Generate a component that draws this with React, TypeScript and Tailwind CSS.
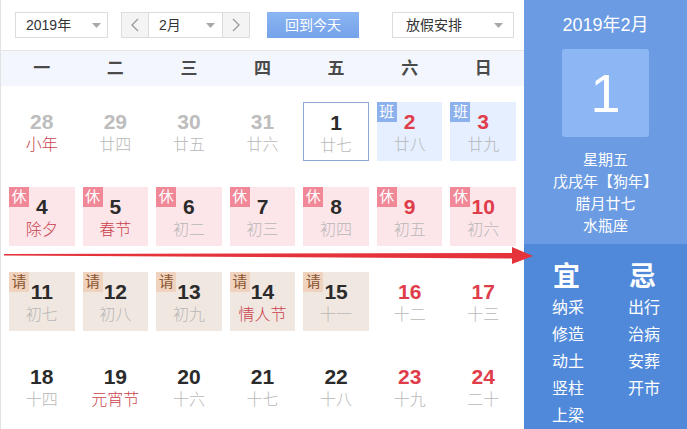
import React from "react";

type Day = {
  n: number;
  lunar: string;
  numColor?: "gray" | "dark" | "red";
  lunarRed?: boolean;
  tag?: "休" | "班" | "请";
  today?: boolean;
};

const rows: Day[][] = [
  [
    { n: 28, lunar: "小年", numColor: "gray", lunarRed: true },
    { n: 29, lunar: "廿四", numColor: "gray" },
    { n: 30, lunar: "廿五", numColor: "gray" },
    { n: 31, lunar: "廿六", numColor: "gray" },
    { n: 1, lunar: "廿七", today: true },
    { n: 2, lunar: "廿八", numColor: "red", tag: "班" },
    { n: 3, lunar: "廿九", numColor: "red", tag: "班" },
  ],
  [
    { n: 4, lunar: "除夕", lunarRed: true, tag: "休" },
    { n: 5, lunar: "春节", lunarRed: true, tag: "休" },
    { n: 6, lunar: "初二", tag: "休" },
    { n: 7, lunar: "初三", tag: "休" },
    { n: 8, lunar: "初四", tag: "休" },
    { n: 9, lunar: "初五", numColor: "red", tag: "休" },
    { n: 10, lunar: "初六", numColor: "red", tag: "休" },
  ],
  [
    { n: 11, lunar: "初七", tag: "请" },
    { n: 12, lunar: "初八", tag: "请" },
    { n: 13, lunar: "初九", tag: "请" },
    { n: 14, lunar: "情人节", lunarRed: true, tag: "请" },
    { n: 15, lunar: "十一", tag: "请" },
    { n: 16, lunar: "十二", numColor: "red" },
    { n: 17, lunar: "十三", numColor: "red" },
  ],
  [
    { n: 18, lunar: "十四" },
    { n: 19, lunar: "元宵节", lunarRed: true },
    { n: 20, lunar: "十六" },
    { n: 21, lunar: "十七" },
    { n: 22, lunar: "十八" },
    { n: 23, lunar: "十九", numColor: "red" },
    { n: 24, lunar: "二十", numColor: "red" },
  ],
];

const weekdays = ["一", "二", "三", "四", "五", "六", "日"];
const yi = ["纳采", "修造", "动土", "竖柱", "上梁"];
const ji = ["出行", "治病", "安葬", "开市"];

function Caret() {
  return (
    <svg width="9" height="5" viewBox="0 0 9 5" className="shrink-0">
      <path d="M0 0 L9 0 L4.5 5 Z" fill="#a8a8a8" />
    </svg>
  );
}

function Chevron({ dir }: { dir: "left" | "right" }) {
  return (
    <svg width="8" height="14" viewBox="0 0 8 14">
      <path
        d={dir === "left" ? "M7 1 L1 7 L7 13" : "M1 1 L7 7 L1 13"}
        fill="none"
        stroke="#9a9a9a"
        strokeWidth="1.3"
      />
    </svg>
  );
}

function Cell({ d }: { d: Day }) {
  let bg = "bg-transparent";
  if (d.tag === "休") bg = "bg-[#fde6ea]";
  if (d.tag === "班") bg = "bg-[#e5efff]";
  if (d.tag === "请") bg = "bg-[#f1e7e1]";
  const border = d.today ? "border border-[#8eaad4]" : "";
  const numColor =
    d.numColor === "gray" ? "text-[#bdbdbd]" : d.numColor === "red" ? "text-[#e03d4b]" : "text-[#2b2b2b]";
  const lunarColor = d.lunarRed ? "text-[#c9414b]" : "text-[#b8b8b8]";
  let badge = "";
  if (d.tag === "休") badge = "bg-[#f08898] text-white";
  if (d.tag === "班") badge = "bg-[#8db1ec] text-white";
  if (d.tag === "请") badge = "bg-[#f0d3bf] text-[#8a5530]";
  return (
    <div className={`relative mx-[4px] h-[59px] ${bg} ${border} flex flex-col items-center pt-[8px]`}>
      {d.tag && (
        <span className={`absolute left-0 top-0 w-[20px] h-[20px] text-[15px] leading-[20px] text-center ${badge}`}>
          {d.tag}
        </span>
      )}
      <span className={`text-[21px] leading-[24px] font-bold ${numColor}`}>{d.n}</span>
      <span className={`text-[16px] leading-[22px] font-light ${lunarColor}`}>{d.lunar}</span>
    </div>
  );
}

export default function App() {
  return (
    <div
      className="relative flex w-[687px] h-[429px] overflow-hidden bg-white"
      style={{ fontFamily: '"Liberation Sans", "Noto Sans CJK SC", sans-serif' }}
    >
      <div className="w-[524px] shrink-0 border-l border-[#e2e2e2] flex flex-col">
        <div className="h-[51px] flex items-center pl-[14px] border-b border-[#e6e6e6]">
          <div className="w-[93px] h-[26px] border border-[#dcdcdc] flex items-center justify-between pl-[10px] pr-[6px] text-[14px] text-[#333]">
            <span>2019年</span>
            <Caret />
          </div>
          <div className="ml-[13px] h-[26px] flex border border-[#dcdcdc]">
            <div className="w-[27px] bg-[#f4f4f4] flex items-center justify-center border-r border-[#dcdcdc]">
              <Chevron dir="left" />
            </div>
            <div className="w-[73px] flex items-center justify-between pl-[10px] pr-[7px] text-[14px] text-[#333]">
              <span>2月</span>
              <Caret />
            </div>
            <div className="w-[27px] bg-[#f4f4f4] flex items-center justify-center border-l border-[#dcdcdc]">
              <Chevron dir="right" />
            </div>
          </div>
          <div className="ml-[17px] w-[92px] h-[26px] bg-gradient-to-b from-[#8bb5f2] to-[#75a3ea] text-white text-[14px] flex items-center justify-center">
            回到今天
          </div>
          <div className="ml-[33px] w-[122px] h-[26px] border border-[#dcdcdc] flex items-center justify-between pl-[13px] pr-[10px] text-[14px] text-[#333]">
            <span>放假安排</span>
            <Caret />
          </div>
        </div>
        <div className="h-[35px] grid grid-cols-7 px-[4px] bg-[#f3f7fd]">
          {weekdays.map((w) => (
            <div key={w} className="flex items-center justify-center text-[17px] font-bold text-[#4a4a4a]">
              {w}
            </div>
          ))}
        </div>
        <div className="px-[4px]">
          {rows.map((r, i) => (
            <div key={i} className="grid grid-cols-7 h-[85px] pt-[16px]">
              {r.map((d) => (
                <Cell key={d.n} d={d} />
              ))}
            </div>
          ))}
        </div>
      </div>

      <div className="w-[163px] shrink-0 flex flex-col text-white">
        <div className="h-[247px] bg-[#6b9be2] flex flex-col items-center">
          <div className="mt-[13px] text-[18px] leading-[24px]">2019年2月</div>
          <div className="mt-[12px] w-[87px] h-[88px] rounded-[3px] bg-[#8cb6f4] flex items-center justify-center text-[54px] leading-none">
            1
          </div>
          <div className="mt-[12px] flex flex-col items-center text-[15px] leading-[22px]">
            <span>星期五</span>
            <span>戊戌年【狗年】</span>
            <span>腊月廿七</span>
            <span>水瓶座</span>
          </div>
        </div>
        <div className="flex-1 bg-[#5089da] flex pl-[28px] pt-[16px]">
          <div className="w-[76px] flex flex-col">
            <span className="text-[27px] leading-[34px] font-bold pl-[1px]">宜</span>
            {yi.map((t) => (
              <span key={t} className="text-[16px] leading-[27px]">
                {t}
              </span>
            ))}
          </div>
          <div className="flex flex-col">
            <span className="text-[27px] leading-[34px] font-bold pl-[1px]">忌</span>
            {ji.map((t) => (
              <span key={t} className="text-[16px] leading-[27px]">
                {t}
              </span>
            ))}
          </div>
        </div>
      </div>

      <svg className="absolute left-0 top-0 pointer-events-none" width="687" height="429" viewBox="0 0 687 429">
        <path d="M4 254 L515 253 L515 258.5 L4 255.6 Z" fill="#e4333b" />
        <path d="M512 247 L533 256 L512 264 Z" fill="#e4333b" />
      </svg>
    </div>
  );
}
